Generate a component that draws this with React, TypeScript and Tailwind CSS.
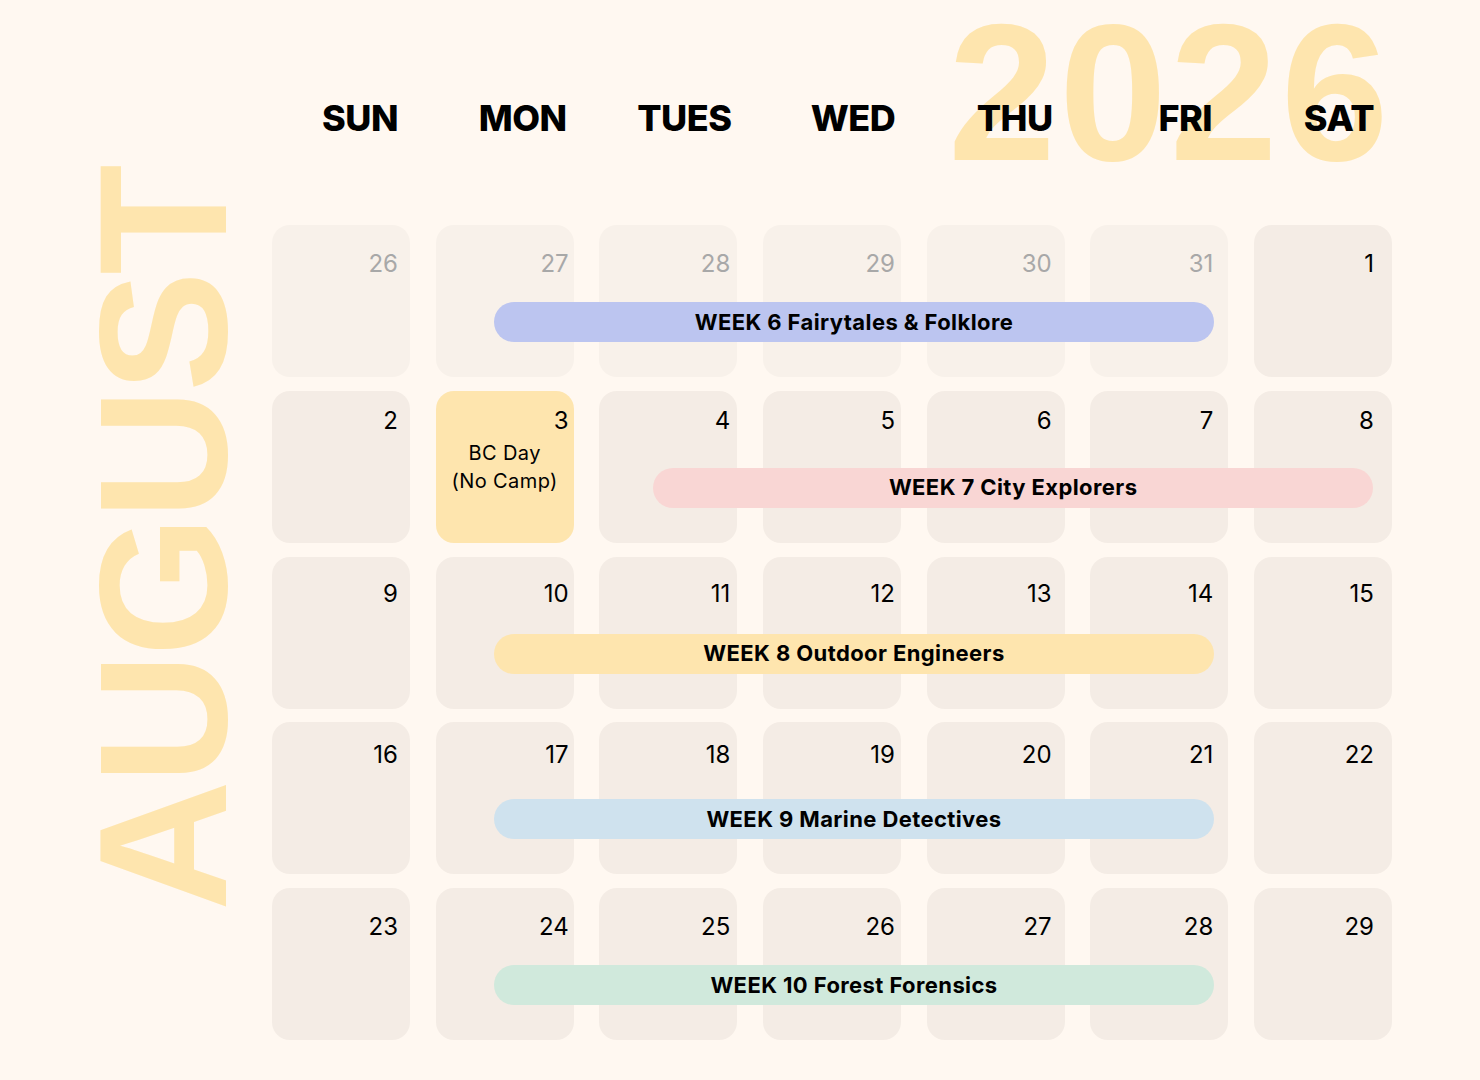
import React from 'react'

const colStart = ['col-start-1', 'col-start-2', 'col-start-3', 'col-start-4', 'col-start-5', 'col-start-6', 'col-start-7']
// the numbers sit a little differently in each column
const numRight = ['pr-[12px]', 'pr-[5px]', 'pr-[7px]', 'pr-[6px]', 'pr-[13px]', 'pr-[15px]', 'pr-[18px]']

const dayNames = [
    { name: 'SUN', pad: 'pl-[38px]' },
    { name: 'MON', pad: 'pl-[36px]' },
    { name: 'TUES', pad: 'pl-[32px]' },
    { name: 'WED', pad: 'pl-[42px]' },
    { name: 'THU', pad: 'pl-[38px]' },
    { name: 'FRI', pad: 'pl-[52px]' },
    { name: 'SAT', pad: 'pl-[32px]' },
]

interface Week {
    days: number[];
    prevCount: number;
    numPad: string;
    bar: { label: string; className: string };
}

const weeks: Week[] = [
    {
        days: [26, 27, 28, 29, 30, 31, 1],
        prevCount: 6,
        numPad: 'pt-[27px]',
        bar: { label: 'WEEK 6 Fairytales & Folklore', className: 'col-start-2 col-end-7 ml-[58px] mr-[14px] bg-[#bcc5f0]' },
    },
    {
        days: [2, 3, 4, 5, 6, 7, 8],
        prevCount: 0,
        numPad: 'pt-[18px]',
        bar: { label: 'WEEK 7 City Explorers', className: 'col-start-3 col-end-8 ml-[54px] mr-[19px] bg-[#f9d6d4]' },
    },
    {
        days: [9, 10, 11, 12, 13, 14, 15],
        prevCount: 0,
        numPad: 'pt-[25px]',
        bar: { label: 'WEEK 8 Outdoor Engineers', className: 'col-start-2 col-end-7 ml-[58px] mr-[14px] bg-[#fee5ae]' },
    },
    {
        days: [16, 17, 18, 19, 20, 21, 22],
        prevCount: 0,
        numPad: 'pt-[21px]',
        bar: { label: 'WEEK 9 Marine Detectives', className: 'col-start-2 col-end-7 ml-[58px] mr-[14px] bg-[#cfe2ee]' },
    },
    {
        days: [23, 24, 25, 26, 27, 28, 29],
        prevCount: 0,
        numPad: 'pt-[27px]',
        bar: { label: 'WEEK 10 Forest Forensics', className: 'col-start-2 col-end-7 ml-[58px] mr-[14px] bg-[#d0e9dc]' },
    },
]

interface DayCellProps {
    day: number;
    idx: number;
    prev: boolean;
    numPad: string;
    holiday: boolean;
}

const DayCell = ({ day, idx, prev, numPad, holiday }: DayCellProps) => {
    const bg = holiday ? 'bg-[#fee5ae]' : prev ? 'bg-[#f8f1ea]' : 'bg-[#f4ece5]'
    return (
        <div className={`${colStart[idx]} row-start-1 rounded-[18px] ${bg} flex flex-col ${numPad}`}>
            <div className={`${numRight[idx]} text-right text-[24px] leading-none ${prev ? 'text-[#a8a8a8]' : 'text-black'}`}>{day}</div>
            {holiday && (
                <div className="mt-[6px] text-center text-[20px] leading-[28px] tracking-[0.4px] text-black">
                    BC Day
                    <br />
                    (No Camp)
                </div>
            )}
        </div>
    )
}

export default function App() {
    return (
        <div className="relative w-[1480px] h-[1080px] overflow-hidden bg-[#fff8f1] font-['Inter',sans-serif]">
            {/* big year behind the header */}
            <div className="absolute left-[948px] top-[-4px] text-[194px] leading-none font-bold tracking-[3px] text-[#fee5ae] font-['Liberation_Sans',Arial,sans-serif] select-none">
                2026
            </div>

            <div className="flex">
                <div className="w-[272px] shrink-0">
                    <div className="ml-[73px] mt-[150px] h-[761px] w-[181px] [writing-mode:vertical-rl] rotate-180 text-[181px] leading-none font-bold tracking-[-3.5px] text-[#fee5ae] font-['Liberation_Sans',Arial,sans-serif]">
                        AUGUST
                    </div>
                </div>

                <div className="w-[1120px] shrink-0">
                    <div className="relative z-10 pt-[100px] grid grid-cols-[repeat(7,138px)] gap-x-[25.67px]">
                        {dayNames.map((d) => (
                            <div key={d.name} className={`${d.pad} text-center text-[36px] leading-none font-extrabold text-black tracking-[-0.5px]`}>
                                {d.name}
                            </div>
                        ))}
                    </div>

                    <div className="mt-[89px] flex flex-col gap-y-[13.75px]">
                        {weeks.map((w, wi) => (
                            <div key={wi} className="grid grid-cols-[repeat(7,138px)] grid-rows-[152px] gap-x-[25.67px]">
                                {w.days.map((d, i) => (
                                    <DayCell
                                        key={i}
                                        day={d}
                                        idx={i}
                                        prev={i < w.prevCount}
                                        numPad={w.numPad}
                                        holiday={wi === 1 && d === 3}
                                    />
                                ))}
                                <div className={`row-start-1 self-start mt-[77px] h-10 rounded-full flex items-center justify-center text-[22px] font-bold text-black tracking-[0.4px] ${w.bar.className}`}>
                                    {w.bar.label}
                                </div>
                            </div>
                        ))}
                    </div>
                </div>
            </div>
        </div>
    )
}
